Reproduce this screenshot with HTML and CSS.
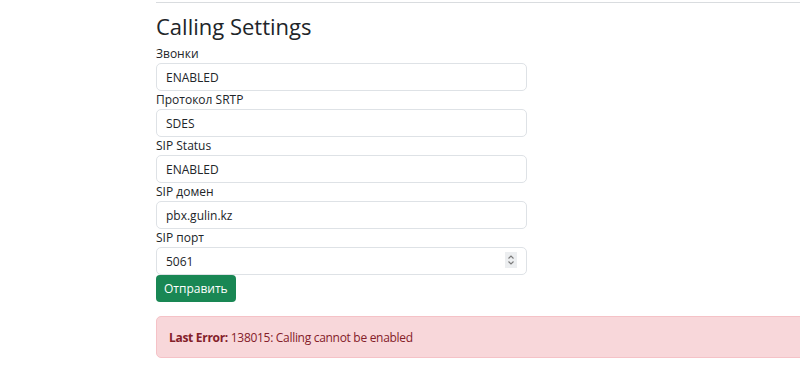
FILE: index.html
```html
<!DOCTYPE html>
<html>
<head>
<meta charset="utf-8">
<link rel="stylesheet" href="styles.css">
</head>
<body>
<div class="page">
  <div class="rule"></div>
  <h3 class="title">Calling Settings</h3>
  <form class="form">
    <label class="label">Звонки</label>
    <input class="field" type="text" value="ENABLED">
    <label class="label">Протокол SRTP</label>
    <input class="field" type="text" value="SDES">
    <label class="label">SIP Status</label>
    <input class="field" type="text" value="ENABLED">
    <label class="label">SIP домен</label>
    <input class="field" type="text" value="pbx.gulin.kz">
    <label class="label">SIP порт</label>
    <div class="num-wrap">
      <input class="field" type="text" value="5061">
      <span class="spin">
        <svg width="12" height="16" viewBox="0 0 12 16"><path d="M3.5 6.5 L6 4 L8.5 6.5 M3.5 9.5 L6 12 L8.5 9.5" fill="none" stroke="#7a7a7a" stroke-width="1.1"/></svg>
      </span>
    </div>
    <div class="actions"><button class="btn" type="button">Отправить</button></div>
  </form>
  <div class="alert"><span class="alert-text"><strong>Last Error:</strong> 138015: Calling cannot be enabled</span></div>
</div>
</body>
</html>
```
FILE: styles.css
```css
html, body {
  margin: 0;
  padding: 0;
  background: #fff;
  overflow: hidden;
}
body {
  font-family: "Open Sans", "Noto Sans", sans-serif;
  color: #212529;
}
.page {
  margin-left: 156px;
  margin-right: -40px;
  padding-top: 2px;
}
.rule {
  border-top: 1px solid #d9dcdf;
}
.title {
  margin: 10px 0 6px;
  font-size: 22px;
  font-weight: 500;
  line-height: 26px;
}
.form {
  display: flex;
  flex-direction: column;
  align-items: flex-start;
}
.label {
  font-size: 12px;
  line-height: 18px;
}
.field {
  box-sizing: border-box;
  width: 371px;
  height: 28px;
  margin: 0;
  padding: 0 9px;
  border: 1px solid #dee2e6;
  border-radius: 5px;
  font-family: inherit;
  font-size: 12px;
  color: #212529;
  background: #fff;
  outline: none;
}
.num-wrap {
  position: relative;
  width: 371px;
  height: 28px;
}
.spin {
  position: absolute;
  left: 349px;
  top: 5px;
  width: 12px;
  height: 16px;
  background: #eceef0;
  display: flex;
}
.actions {
  display: flex;
}
.btn {
  height: 27px;
  padding: 0 8px;
  border: none;
  border-radius: 4px;
  background: #198754;
  color: #fff;
  font-family: inherit;
  font-size: 12px;
}
.alert {
  margin-top: 14px;
  box-sizing: border-box;
  height: 42px;
  display: flex;
  align-items: center;
  padding: 0 12px;
  background: #f8d7da;
  border: 1px solid #f5c2c7;
  border-radius: 5px;
  color: #842029;
  white-space: pre;
}
.alert-text {
  font-family: "Open Sans", sans-serif;
  font-size: 12px;
  letter-spacing: -0.3px;
}
.alert strong {
  font-weight: 700;
}
```
